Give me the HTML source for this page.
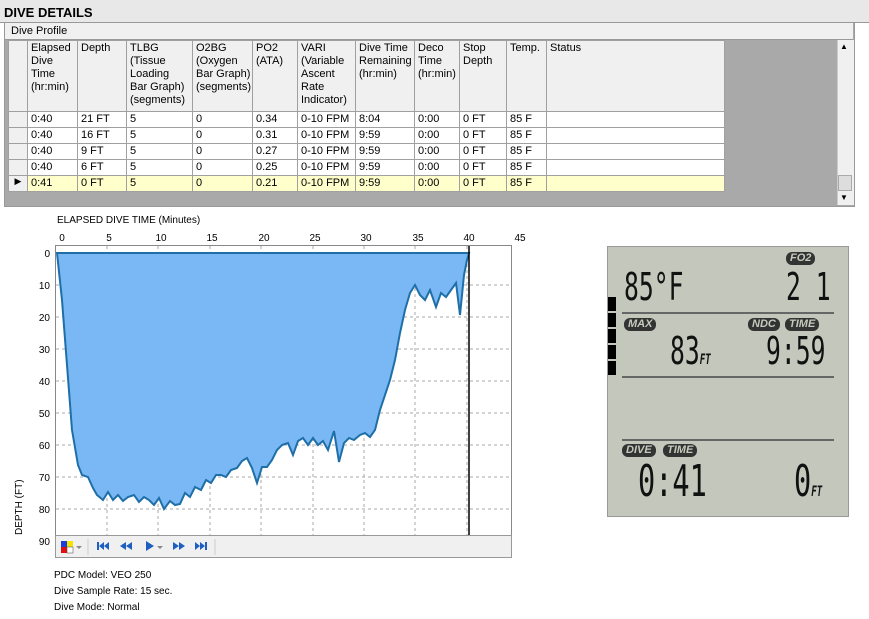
<!DOCTYPE html><html><head><style>
body{margin:0;width:869px;height:619px;background:#fff;font-family:"Liberation Sans",sans-serif;font-size:11px;position:relative;overflow:hidden}
.a{position:absolute}
table{border-collapse:collapse;position:absolute;left:8px;top:40px;font-size:11px;table-layout:fixed;width:716px}
td{border:1px solid #a0a0a0;padding:1px 3px;height:13px;vertical-align:top;white-space:nowrap;background:#fff;overflow:hidden}
th{border:1px solid #a0a0a0;background:#f0f0f0;font-weight:normal;text-align:left;vertical-align:top;padding:1px 3px;line-height:13px;height:68px;overflow:hidden;white-space:nowrap}
td.rh,th.rh{background:#f0f0f0;padding:0}
.y td{background:#ffffcc}
.lbl{background:#333;color:#c5cabd;font-weight:bold;font-style:italic;font-size:11px;border-radius:6px;padding:0 4px;line-height:13px}
.dg{font-family:"DejaVu Sans Mono","Liberation Mono",monospace;transform:scaleX(.65);transform-origin:left;color:#111;white-space:nowrap}
</style></head><body>
<div class="a" style="left:0;top:0;width:869px;height:22px;background:#e8e8e8;border-bottom:1px solid #999"></div>
<div class="a" style="left:4px;top:5px;font-weight:bold;font-size:13px">DIVE DETAILS</div>
<div class="a" style="left:4px;top:22px;width:849px;height:183px;border:1px solid #999;background:#a9a9a9"></div>
<div class="a" style="left:5px;top:23px;width:848px;height:16px;background:#f0f0f0;border-bottom:1px solid #999"></div>
<div class="a" style="left:11px;top:25px">Dive Profile</div>
<table>
<colgroup><col style="width:19px"><col style="width:50px"><col style="width:49px"><col style="width:66px"><col style="width:60px"><col style="width:45px"><col style="width:58px"><col style="width:59px"><col style="width:45px"><col style="width:47px"><col style="width:40px"><col style="width:178px"></colgroup>
<tr><th class="rh"></th><th>Elapsed<br>Dive<br>Time<br>(hr:min)</th><th>Depth</th><th>TLBG<br>(Tissue<br>Loading<br>Bar Graph)<br>(segments)</th><th>O2BG<br>(Oxygen<br>Bar Graph)<br>(segments)</th><th>PO2<br>(ATA)</th><th>VARI<br>(Variable<br>Ascent<br>Rate<br>Indicator)</th><th>Dive Time<br>Remaining<br>(hr:min)</th><th>Deco<br>Time<br>(hr:min)</th><th>Stop<br>Depth</th><th>Temp.</th><th>Status</th></tr>
<tr><td class="rh"></td><td>0:40</td><td>21 FT</td><td>5</td><td>0</td><td>0.34</td><td>0-10 FPM</td><td>8:04</td><td>0:00</td><td>0 FT</td><td>85 F</td><td></td></tr>
<tr><td class="rh"></td><td>0:40</td><td>16 FT</td><td>5</td><td>0</td><td>0.31</td><td>0-10 FPM</td><td>9:59</td><td>0:00</td><td>0 FT</td><td>85 F</td><td></td></tr>
<tr><td class="rh"></td><td>0:40</td><td>9 FT</td><td>5</td><td>0</td><td>0.27</td><td>0-10 FPM</td><td>9:59</td><td>0:00</td><td>0 FT</td><td>85 F</td><td></td></tr>
<tr><td class="rh"></td><td>0:40</td><td>6 FT</td><td>5</td><td>0</td><td>0.25</td><td>0-10 FPM</td><td>9:59</td><td>0:00</td><td>0 FT</td><td>85 F</td><td></td></tr>
<tr class="y"><td class="rh" style="background:#f0f0f0;font-size:9px;text-align:center">&#9654;</td><td>0:41</td><td>0 FT</td><td>5</td><td>0</td><td>0.21</td><td>0-10 FPM</td><td>9:59</td><td>0:00</td><td>0 FT</td><td>85 F</td><td></td></tr>
</table>
<div class="a" style="left:837px;top:40px;width:16px;height:165px;background:#f0f0f0;border-left:1px solid #ccc"></div>
<div class="a" style="left:840px;top:42px;font-size:8px">&#9650;</div>
<div class="a" style="left:840px;top:193px;font-size:8px">&#9660;</div>
<div class="a" style="left:838px;top:175px;width:14px;height:16px;background:#ddd;border:1px solid #aaa;box-sizing:border-box"></div>

<svg class="a" style="left:0;top:205px" width="600" height="414">
<text x="57" y="18" font-size="10" font-family="Liberation Sans">ELAPSED DIVE TIME (Minutes)</text>
<g font-size="10" font-family="Liberation Sans" text-anchor="middle">
<text x="62" y="36">0</text><text x="109" y="36">5</text><text x="161" y="36">10</text><text x="212" y="36">15</text><text x="264" y="36">20</text><text x="315" y="36">25</text><text x="366" y="36">30</text><text x="418" y="36">35</text><text x="469" y="36">40</text><text x="520" y="36">45</text>
</g>
<g font-size="10" font-family="Liberation Sans" text-anchor="end">
<text x="50" y="52">0</text><text x="50" y="84">10</text><text x="50" y="116">20</text><text x="50" y="148">30</text><text x="50" y="180">40</text><text x="50" y="212">50</text><text x="50" y="244">60</text><text x="50" y="276">70</text><text x="50" y="308">80</text><text x="50" y="340">90</text>
</g>
<text transform="translate(22,330) rotate(-90)" font-size="10" font-family="Liberation Sans">DEPTH (FT)</text>
<rect x="55.5" y="40.5" width="456" height="290" fill="#fff" stroke="#888"/>
<g stroke="#aaa" stroke-dasharray="3,3">
<path d="M107 41V330M158 41V330M210 41V330M261 41V330M313 41V330M364 41V330M415 41V330M467 41V330"/>
<path d="M56 80H511M56 112H511M56 144H511M56 176H511M56 208H511M56 240H511M56 272H511M56 304H511"/>
</g>
<path fill="#7ab8f5" stroke="#1e6fa8" stroke-width="2" d="M57 48 L62 95 L67 160 L72 225 L78 260 L82 270 L88 272 L93 283 L97 290 L103 295 L108 287 L113 295 L118 290 L123 296 L128 292 L134 290 L139 297 L144 292 L149 295 L154 300 L159 293 L164 304 L170 296 L175 300 L180 299 L185 288 L190 292 L195 282 L201 285 L206 275 L211 278 L216 270 L221 270 L226 272 L231 265 L237 263 L242 256 L247 253 L252 263 L257 278 L262 262 L267 262 L272 255 L277 245 L282 240 L288 238 L293 250 L298 236 L303 233 L308 240 L313 233 L318 240 L323 236 L328 245 L334 226 L339 257 L344 238 L349 233 L354 235 L360 230 L365 228 L370 232 L375 225 L380 205 L385 190 L390 175 L395 155 L400 128 L405 105 L410 88 L415 80 L420 90 L425 95 L430 85 L436 102 L441 88 L446 92 L451 85 L456 78 L460 110 L464 70 L467 55 L469 48 Z"/>
<line x1="469" y1="41" x2="469" y2="330" stroke="#000" stroke-width="1.5"/>
<rect x="55.5" y="330.5" width="456" height="22" fill="#f0f0f0" stroke="#999"/>
<rect x="61" y="336" width="6" height="6" fill="#1b3fd8"/><rect x="67" y="336" width="6" height="6" fill="#f5e400"/><rect x="61" y="342" width="6" height="6" fill="#e01010"/><rect x="67" y="342" width="6" height="6" fill="#fff" stroke="#444" stroke-width=".5"/>
<path d="M76 341l3 3 3-3z" fill="#888"/>
<line x1="88" y1="334" x2="88" y2="350" stroke="#ccc"/>
<g fill="#1f5fbf">
<rect x="97" y="337" width="2" height="8"/><path d="M99 341l5-4v8zM104 341l5-4v8z"/>
<path d="M120 341l6-4v8zM126 341l6-4v8z"/>
<path d="M146 336l8 5-8 5z"/>
<path d="M173 337l6 4-6 4zM179 337l6 4-6 4z"/>
<path d="M195 337l5 4-5 4zM200 337l5 4-5 4z"/><rect x="205" y="337" width="2" height="8"/>
</g>
<path d="M157 341l3 3 3-3z" fill="#888"/>
<line x1="215" y1="334" x2="215" y2="350" stroke="#ccc"/>
<g font-size="10" font-family="Liberation Sans"><text x="54" y="373">PDC Model: VEO 250</text><text x="54" y="389">Dive Sample Rate: 15 sec.</text><text x="54" y="405">Dive Mode: Normal</text></g>
</svg>

<div class="a" style="left:607px;top:246px;width:242px;height:271px;background:#c4c8bc;border:1px solid #999;box-sizing:border-box;overflow:hidden">
<div class="a" style="left:0;top:50px;width:8px;height:78px;background:repeating-linear-gradient(#000 0 14px,#c4c8bc 14px 16px)"></div>
<div class="a lbl" style="left:178px;top:5px">FO2</div>
<div class="a dg" style="left:16px;top:20px;font-size:38px;line-height:40px">85°F</div>
<div class="a dg" style="left:178px;top:20px;font-size:38px;line-height:40px">2 1</div>
<div class="a" style="left:14px;top:65px;width:212px;height:2px;background:#666"></div>
<div class="a lbl" style="left:16px;top:71px">MAX</div>
<div class="a lbl" style="left:140px;top:71px">NDC</div><div class="a lbl" style="left:177px;top:71px">TIME</div>
<div class="a dg" style="left:62px;top:84px;font-size:38px;line-height:40px">83<span style="font-size:14px;font-style:italic;font-weight:bold">FT</span></div>
<div class="a dg" style="left:158px;top:84px;font-size:38px;line-height:40px">9:59</div>
<div class="a" style="left:14px;top:129px;width:212px;height:2px;background:#666"></div>
<div class="a" style="left:14px;top:192px;width:212px;height:2px;background:#666"></div>
<div class="a lbl" style="left:14px;top:197px">DIVE</div><div class="a lbl" style="left:55px;top:197px">TIME</div>
<div class="a dg" style="left:30px;top:212px;font-size:44px;line-height:46px">0:41</div>
<div class="a dg" style="left:186px;top:212px;font-size:44px;line-height:46px">0<span style="font-size:14px;font-style:italic;font-weight:bold">FT</span></div>
</div>
</body></html>
